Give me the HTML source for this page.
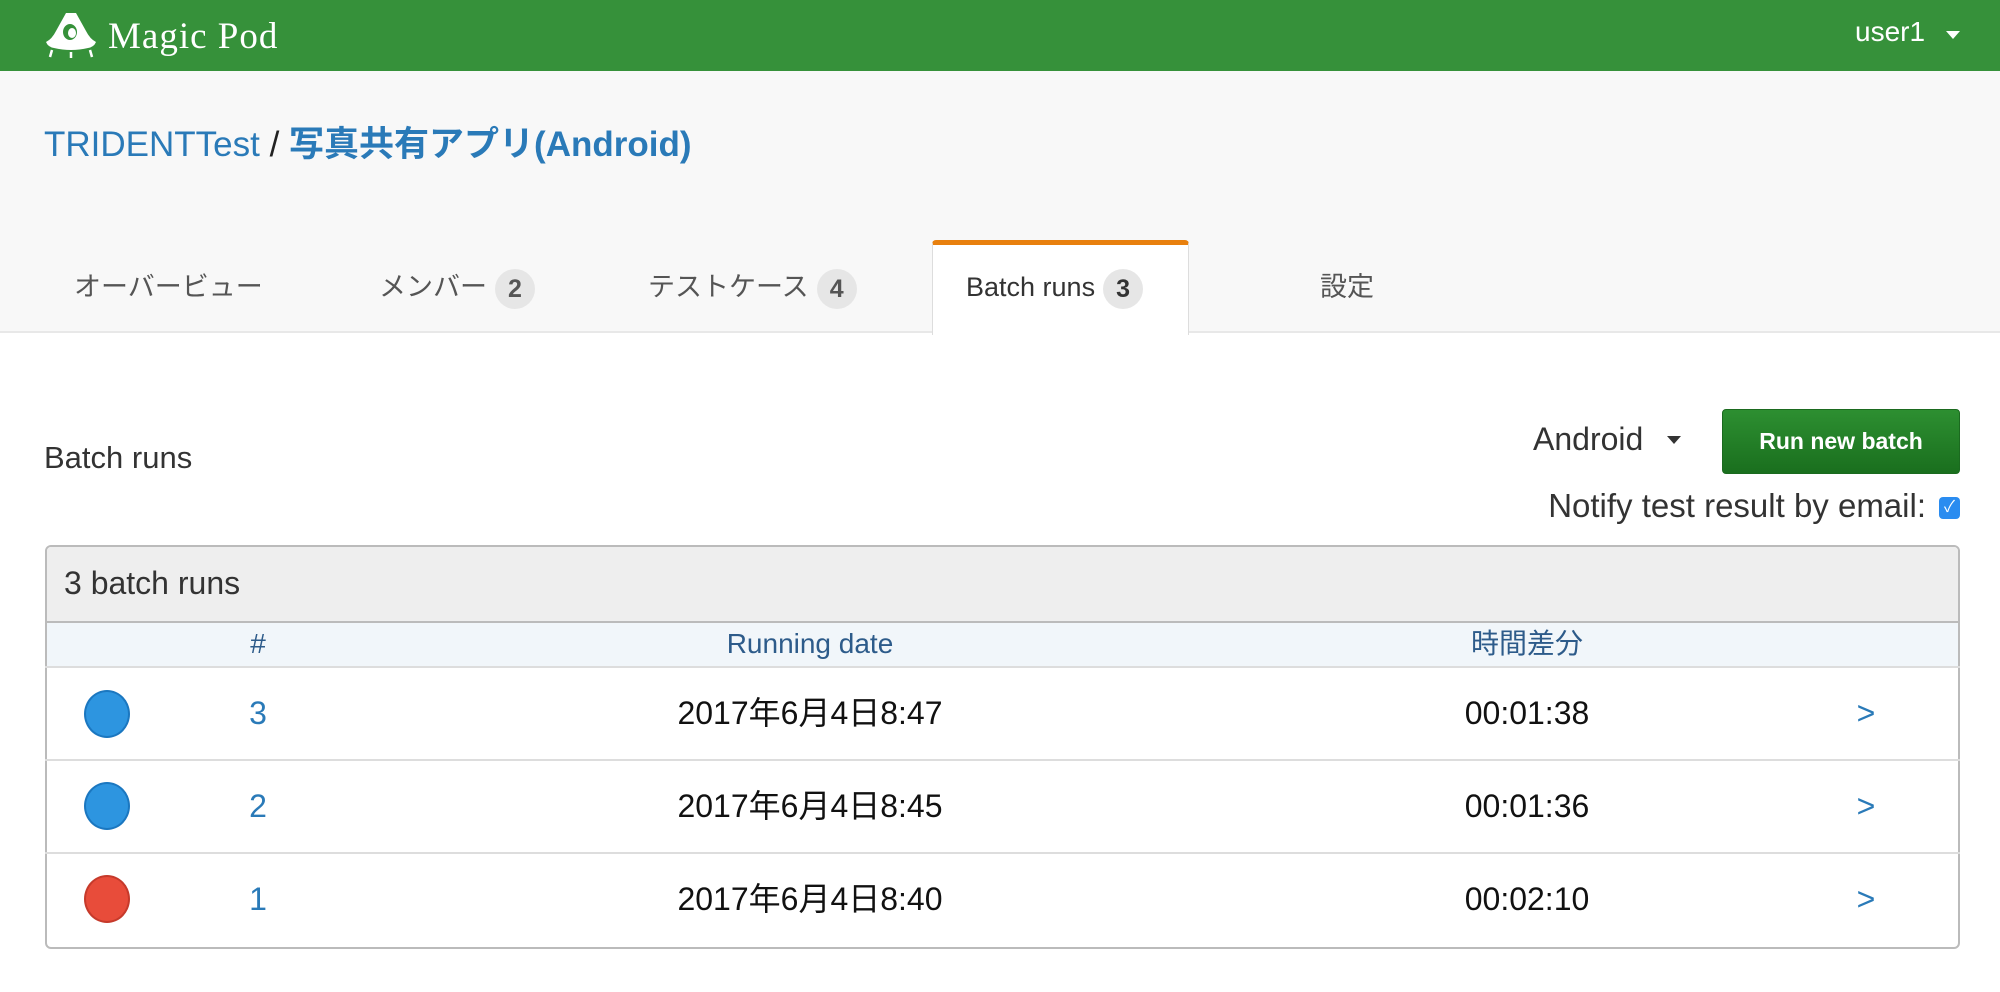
<!DOCTYPE html>
<html><head><meta charset="utf-8"><style>
*{margin:0;padding:0;box-sizing:border-box}
body{width:2000px;height:992px;background:#fff;font-family:"Liberation Sans","Noto Sans CJK JP",sans-serif;position:relative;overflow:hidden;color:#333}
.a{position:absolute;white-space:nowrap}
.hdr{position:absolute;left:0;top:0;width:2000px;height:71px;background:#36913a}
.sub{position:absolute;left:0;top:71px;width:2000px;height:262px;background:#f8f8f8;border-bottom:2px solid #e8e8e8}
.tab{font-size:27px;color:#555;line-height:40px}
.badge{display:inline-block;width:40px;height:40px;border-radius:20px;background:#e6e6e6;color:#555;font-weight:bold;text-align:center;line-height:40px;margin-left:8px;font-size:25px;vertical-align:middle}
.row{position:absolute;left:45px;width:1915px;border-top:2px solid #ddd}
.c{position:absolute;text-align:center;white-space:nowrap;width:400px;margin-left:-200px;height:94px;line-height:94px}
.h{position:absolute;text-align:center;white-space:nowrap;width:400px;margin-left:-200px;top:621px;height:45px;line-height:45px;font-size:28px;color:#2d5b8a}
.dot{position:absolute;left:84px;width:46px;height:48px;border-radius:50%}
.f{font-size:32px;color:#111}
</style></head><body>
<div class="hdr"></div>
<svg class="a" style="left:44px;top:11px" width="54" height="48" viewBox="0 0 54 48">
<path d="M22 2 L32 2 L42 20 Q46 28 52 31 Q50 36 44 37 Q27 41 10 37 Q4 36 2 31 Q8 28 12 20 Z" fill="#fff"/>
<ellipse cx="26" cy="21" rx="7" ry="8" fill="#36913a"/>
<ellipse cx="28" cy="22" rx="4" ry="5" fill="#fff"/>
<path d="M8 39 L6 46 M46 39 L48 46 M27 41 L27 47" stroke="#fff" stroke-width="2.5"/>
</svg>
<div class="a" style="left:108px;top:15px;font-family:'Liberation Serif',serif;font-size:37px;letter-spacing:1px;color:#fff">Magic Pod</div>
<div class="a" style="left:1855px;top:16px;font-size:28px;color:#fff">user1</div>
<svg class="a" style="left:1946px;top:31px" width="14" height="9"><path d="M0 0H14L7 8Z" fill="#fff"/></svg>
<div class="sub"></div>
<div class="a" style="left:44px;top:120px;font-size:35px;line-height:50px;color:#2a7ab8">TRIDENTTest <span style="color:#222">/</span> <b>写真共有アプリ(Android)</b></div>
<div class="a" style="left:932px;top:240px;width:257px;height:95px;background:#fff;border:1px solid #ddd;border-bottom:none;border-top:5px solid #e8800e;border-radius:4px 4px 0 0"></div>
<div class="a tab" style="left:74px;top:267px">オーバービュー</div>
<div class="a tab" style="left:379px;top:267px">メンバー<span class="badge">2</span></div>
<div class="a tab" style="left:648px;top:267px">テストケース<span class="badge">4</span></div>
<div class="a tab" style="left:966px;top:267px;color:#333">Batch runs<span class="badge" style="color:#333">3</span></div>
<div class="a tab" style="left:1320px;top:267px">設定</div>
<div class="a" style="left:44px;top:440px;font-size:31px;color:#333">Batch runs</div>
<div class="a" style="left:1533px;top:421px;font-size:32px;color:#333">Android</div>
<svg class="a" style="left:1667px;top:436px" width="14" height="9"><path d="M0 0H14L7 8Z" fill="#333"/></svg>
<div class="a" style="left:1722px;top:409px;width:238px;height:65px;border-radius:4px;background:linear-gradient(#2d8f31,#1a6f1e);border:1px solid #1b6a1f;color:#fff;font-weight:bold;font-size:23px;text-align:center;line-height:63px">Run new batch</div>
<div class="a" style="left:1426px;top:487px;font-size:33px;color:#333;width:500px;text-align:right">Notify test result by email:</div>
<div class="a" style="left:1939px;top:497px;width:21px;height:22px;border-radius:4px;background:#2a8cf0;color:#fff;font-size:16px;text-align:center;line-height:22px">✓</div>
<div class="a" style="left:45px;top:545px;width:1915px;height:404px;border:2px solid #bbb;border-radius:6px;overflow:hidden">
<div style="position:absolute;left:0;top:0;width:100%;height:76px;background:#eee;border-bottom:2px solid #bbb"></div>
<div style="position:absolute;left:0;top:76px;width:100%;height:45px;background:#f1f6fa"></div>
</div>
<div class="a" style="left:64px;top:565px;font-size:32px;color:#333">3 batch runs</div>
<div class="h" style="left:258px">#</div>
<div class="h" style="left:810px">Running date</div>
<div class="h" style="left:1527px">時間差分</div>
<div class="row" style="top:666px"></div>
<div class="row" style="top:759px"></div>
<div class="row" style="top:852px"></div>
<div class="dot" style="top:690px;background:#2d95e0;border:2px solid #1b77c0"></div>
<div class="dot" style="top:782px;background:#2d95e0;border:2px solid #1b77c0"></div>
<div class="dot" style="top:875px;background:#e84c3a;border:2px solid #c63a2b"></div>
<div class="c f" style="left:258px;top:666px;color:#2a7ab8">3</div>
<div class="c f" style="left:258px;top:759px;color:#2a7ab8">2</div>
<div class="c f" style="left:258px;top:852px;color:#2a7ab8">1</div>
<div class="c f" style="left:810px;top:666px">2017年6月4日8:47</div>
<div class="c f" style="left:810px;top:759px">2017年6月4日8:45</div>
<div class="c f" style="left:810px;top:852px">2017年6月4日8:40</div>
<div class="c f" style="left:1527px;top:666px">00:01:38</div>
<div class="c f" style="left:1527px;top:759px">00:01:36</div>
<div class="c f" style="left:1527px;top:852px">00:02:10</div>
<div class="c f" style="left:1866px;top:666px;color:#2a7ab8">&gt;</div>
<div class="c f" style="left:1866px;top:759px;color:#2a7ab8">&gt;</div>
<div class="c f" style="left:1866px;top:852px;color:#2a7ab8">&gt;</div>
</body></html>
